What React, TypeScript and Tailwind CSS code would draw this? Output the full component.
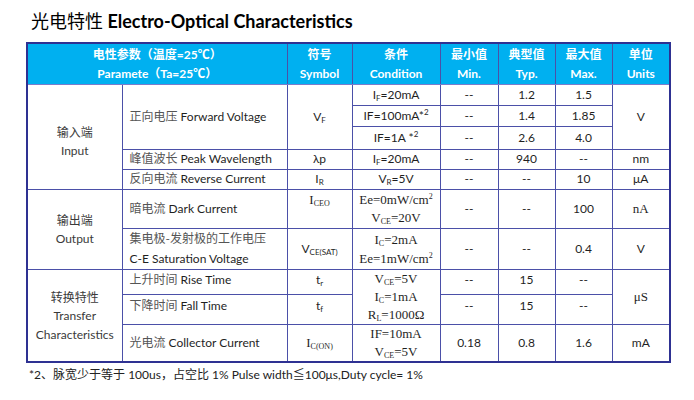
const sans = "font-['Lato','Liberation_Sans','Noto_Sans_CJK_SC',sans-serif]";
const serif = "font-['Liberation_Serif','Noto_Serif_CJK_SC',serif]";

const cell = "border border-[#4b50a8] text-center align-middle p-0";

function Sub({ children }: { children: React.ReactNode }) {
  return <span className="relative top-[2px] text-[8px] leading-none">{children}</span>;
}

function Sup({ children }: { children: React.ReactNode }) {
  return <span className="relative top-[-5px] text-[8px] leading-none">{children}</span>;
}

export default function App() {
  return (
    <div className={`w-[694px] h-[400px] bg-white text-[#1f1f1f] ${sans}`}>
      <h1 className="pl-[31px] pt-[8px] text-[18px] leading-[25px] font-bold text-black">
        <span className="font-['Noto_Sans_CJK_SC',sans-serif] font-normal">光电特性</span>{" "}
        <span>Electro-Optical Characteristics</span>
      </h1>

      <table className="ml-[26px] mt-[8px] w-[645px] border-collapse border-2 border-[#2e3192] text-[12px] leading-[18px] table-fixed">
        <colgroup>
          <col className="w-[95px]" />
          <col className="w-[165px]" />
          <col className="w-[65px]" />
          <col className="w-[88px]" />
          <col className="w-[58px]" />
          <col className="w-[57px]" />
          <col className="w-[57px]" />
          <col className="w-[58px]" />
        </colgroup>
        <thead>
          <tr className="h-[41px] bg-[#00b0f0] text-white font-bold leading-[19px]">
            <th colSpan={2} className={`${cell} border-b-[#7a7ccb]`}>
              <div>电性参数（温度=25℃）</div>
              <div>Paramete（Ta=25℃）</div>
            </th>
            <th className={`${cell} border-b-[#7a7ccb]`}>
              <div>符号</div>
              <div>Symbol</div>
            </th>
            <th className={`${cell} border-b-[#7a7ccb]`}>
              <div>条件</div>
              <div>Condition</div>
            </th>
            <th className={`${cell} border-b-[#7a7ccb]`}>
              <div>最小值</div>
              <div>Min.</div>
            </th>
            <th className={`${cell} border-b-[#7a7ccb]`}>
              <div>典型值</div>
              <div>Typ.</div>
            </th>
            <th className={`${cell} border-b-[#7a7ccb]`}>
              <div>最大值</div>
              <div>Max.</div>
            </th>
            <th className={`${cell} border-b-[#7a7ccb]`}>
              <div>单位</div>
              <div>Units</div>
            </th>
          </tr>
        </thead>
        <tbody>
          <tr className="h-[21px]">
            <td rowSpan={5} className={`${cell} text-[#3a3a3a] leading-[19px]`}>
              <div className="font-['Noto_Sans_CJK_SC',sans-serif] pt-[8px]">输入端</div>
              <div>Input</div>
            </td>
            <td rowSpan={3} className={`${cell} text-left pl-[7px]`}>
              <span className="text-[#555]">正向电压</span> Forward Voltage
            </td>
            <td rowSpan={3} className={cell}>
              V<Sub>F</Sub>
            </td>
            <td className={cell}>
              I<Sub>F</Sub>=20mA
            </td>
            <td className={cell}>--</td>
            <td className={cell}>1.2</td>
            <td className={cell}>1.5</td>
            <td rowSpan={3} className={cell}>V</td>
          </tr>
          <tr className="h-[21px]">
            <td className={cell}>
              IF=100mA*<Sup>2</Sup>
            </td>
            <td className={cell}>--</td>
            <td className={cell}>1.4</td>
            <td className={cell}>1.85</td>
          </tr>
          <tr className="h-[23px]">
            <td className={cell}>
              IF=1A *<Sup>2</Sup>
            </td>
            <td className={cell}>--</td>
            <td className={cell}>2.6</td>
            <td className={cell}>4.0</td>
          </tr>
          <tr className="h-[20px]">
            <td className={`${cell} text-left pl-[7px]`}>
              <span className="text-[#555]">峰值波长</span> Peak Wavelength
            </td>
            <td className={cell}>λp</td>
            <td className={cell}>
              I<Sub>F</Sub>=20mA
            </td>
            <td className={cell}>--</td>
            <td className={cell}>940</td>
            <td className={cell}>--</td>
            <td className={cell}>nm</td>
          </tr>
          <tr className="h-[20px]">
            <td className={`${cell} text-left pl-[7px]`}>
              <span className="text-[#555]">反向电流</span> Reverse Current
            </td>
            <td className={cell}>
              I<Sub>R</Sub>
            </td>
            <td className={cell}>
              V<Sub>R</Sub>=5V
            </td>
            <td className={cell}>--</td>
            <td className={cell}>--</td>
            <td className={cell}>10</td>
            <td className={cell}>μA</td>
          </tr>

          <tr className="h-[39px]">
            <td rowSpan={2} className={`${cell} text-[#3a3a3a] leading-[19px]`}>
              <div className="font-['Noto_Sans_CJK_SC',sans-serif]">输出端</div>
              <div>Output</div>
            </td>
            <td className={`${cell} text-left pl-[7px]`}>
              <span className="text-[#555]">暗电流</span> Dark Current
            </td>
            <td className={`${cell} align-top pt-[1px] ${serif} text-[13px]`}>
              I<Sub>CEO</Sub>
            </td>
            <td className={`${cell} ${serif} text-[13px]`}>
              <div>
                Ee=0mW/cm<Sup>2</Sup>
              </div>
              <div>
                V<Sub>CE</Sub>=20V
              </div>
            </td>
            <td className={cell}>--</td>
            <td className={cell}>--</td>
            <td className={cell}>100</td>
            <td className={`${cell} ${serif} text-[13px]`}>nA</td>
          </tr>
          <tr className="h-[41px]">
            <td className={`${cell} text-left pl-[7px] leading-[20px]`}>
              <div className="text-[#555]">集电极-发射极的工作电压</div>
              <div>C-E Saturation Voltage</div>
            </td>
            <td className={cell}>
              V<Sub>CE(SAT)</Sub>
            </td>
            <td className={`${cell} ${serif} text-[13px] leading-[19px]`}>
              <div>
                I<Sub>C</Sub>=2mA
              </div>
              <div>
                Ee=1mW/cm<Sup>2</Sup>
              </div>
            </td>
            <td className={cell}>--</td>
            <td className={cell}>--</td>
            <td className={cell}>0.4</td>
            <td className={cell}>V</td>
          </tr>

          <tr className="h-[25px]">
            <td rowSpan={3} className={`${cell} text-[#3a3a3a] leading-[19px]`}>
              <div className="font-['Noto_Sans_CJK_SC',sans-serif]">转换特性</div>
              <div>Transfer</div>
              <div>Characteristics</div>
            </td>
            <td className={`${cell} text-left pl-[7px] align-top pt-[1px]`}>
              <span className="text-[#555]">上升时间</span> Rise Time
            </td>
            <td className={`${cell} align-top pt-[1px]`}>
              t<Sub>r</Sub>
            </td>
            <td rowSpan={2} className={`${cell} ${serif} text-[13px] leading-[18px]`}>
              <div>
                V<Sub>CE</Sub>=5V
              </div>
              <div>
                I<Sub>C</Sub>=1mA
              </div>
              <div>
                R<Sub>L</Sub>=1000Ω
              </div>
            </td>
            <td className={`${cell} align-top pt-[1px]`}>--</td>
            <td className={`${cell} align-top pt-[1px]`}>15</td>
            <td className={`${cell} align-top pt-[1px]`}>--</td>
            <td rowSpan={2} className={`${cell} ${serif} text-[13px]`}>μS</td>
          </tr>
          <tr className="h-[30px]">
            <td className={`${cell} text-left pl-[7px] align-top pt-[2px]`}>
              <span className="text-[#555]">下降时间</span> Fall Time
            </td>
            <td className={`${cell} align-top pt-[2px]`}>
              t<Sub>f</Sub>
            </td>
            <td className={`${cell} align-top pt-[2px]`}>--</td>
            <td className={`${cell} align-top pt-[2px]`}>15</td>
            <td className={`${cell} align-top pt-[2px]`}>--</td>
          </tr>
          <tr className="h-[38px]">
            <td className={`${cell} text-left pl-[7px]`}>
              <span className="text-[#555]">光电流</span> Collector Current
            </td>
            <td className={`${cell} ${serif} text-[13px]`}>
              I<Sub>C(ON)</Sub>
            </td>
            <td className={`${cell} ${serif} text-[13px]`}>
              <div>IF=10mA</div>
              <div>
                V<Sub>CE</Sub>=5V
              </div>
            </td>
            <td className={cell}>0.18</td>
            <td className={cell}>0.8</td>
            <td className={cell}>1.6</td>
            <td className={cell}>mA</td>
          </tr>
        </tbody>
      </table>

      <p className="pl-[29px] pt-[3px] text-[12px] leading-[16px] text-[#222]">
        *2、<span className="font-['Noto_Sans_CJK_SC',sans-serif]">脉宽少于等于</span> 100us，
        <span className="font-['Noto_Sans_CJK_SC',sans-serif]">占空比</span> 1% Pulse width≦100μs,Duty cycle= 1%
      </p>
    </div>
  );
}
